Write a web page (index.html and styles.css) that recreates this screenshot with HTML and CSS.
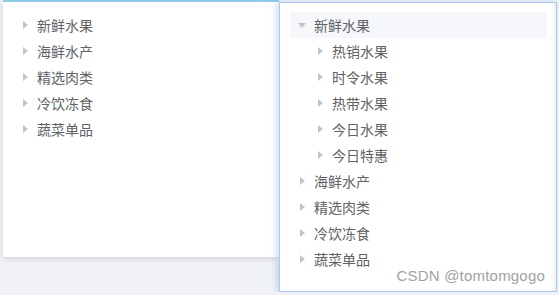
FILE: index.html
```html
<!DOCTYPE html>
<html lang="zh-CN">
<head>
  <meta charset="UTF-8" />
  <meta name="viewport" content="width=device-width, initial-scale=1.0" />
  <title>树形控件</title>
  <link rel="stylesheet" href="styles.css">
</head>
<body>
  <div class="stage">
    <div class="card card-closed">
      <div class="tree">
        <div class="node"><span class="caret"></span><span class="label">新鲜水果</span></div>
        <div class="node"><span class="caret"></span><span class="label">海鲜水产</span></div>
        <div class="node"><span class="caret"></span><span class="label">精选肉类</span></div>
        <div class="node"><span class="caret"></span><span class="label">冷饮冻食</span></div>
        <div class="node"><span class="caret"></span><span class="label">蔬菜单品</span></div>
      </div>
    </div>

    <div class="card card-open">
      <div class="tree">
        <div class="node current"><span class="caret down"></span><span class="label">新鲜水果</span></div>
        <div class="children">
          <div class="node"><span class="caret"></span><span class="label">热销水果</span></div>
          <div class="node"><span class="caret"></span><span class="label">时令水果</span></div>
          <div class="node"><span class="caret"></span><span class="label">热带水果</span></div>
          <div class="node"><span class="caret"></span><span class="label">今日水果</span></div>
          <div class="node"><span class="caret"></span><span class="label">今日特惠</span></div>
        </div>
        <div class="node"><span class="caret"></span><span class="label">海鲜水产</span></div>
        <div class="node"><span class="caret"></span><span class="label">精选肉类</span></div>
        <div class="node"><span class="caret"></span><span class="label">冷饮冻食</span></div>
        <div class="node"><span class="caret"></span><span class="label">蔬菜单品</span></div>
      </div>
      <div class="watermark">CSDN @tomtomgogo</div>
    </div>
  </div>
</body>
</html>
```

FILE: styles.css
```css
body {
  margin: 0;
  background-color: #f0f2f5;
  font-family: "Noto Sans CJK SC", "Microsoft YaHei", sans-serif;
  color: #606266;
}
.stage {
  display: flex;
  align-items: flex-start;
  padding-left: 3px;
}
.card {
  background: #fff;
  box-sizing: border-box;
}
.card-closed {
  width: 276px;
  height: 257px;
  border-top: 2px solid #8ccbe9;
  padding: 10px 10px 0 10px;
  box-shadow: 0 2px 6px rgba(0, 0, 0, 0.12);
}
.card-open {
  position: relative;
  width: 278px;
  height: 290px;
  margin-top: 2px;
  border: 1px solid #a9c8f2;
  padding: 9px 9px 0 10px;
  box-shadow: -3px 0 6px rgba(120, 160, 230, 0.35), inset -4px 0 4px -2px rgba(0, 0, 0, 0.08);
}
.node {
  display: flex;
  align-items: center;
  height: 26px;
  font-size: 14px;
}
.node.current {
  background-color: #f5f7fa;
}
.children .node {
  padding-left: 18px;
}
.caret {
  width: 24px;
  height: 26px;
  display: flex;
  align-items: center;
  justify-content: center;
  flex-shrink: 0;
}
.caret::before {
  content: "";
  width: 0;
  height: 0;
  border-top: 4px solid transparent;
  border-bottom: 4px solid transparent;
  border-left: 5px solid #c0c4cc;
}
.caret.down::before {
  border-left: 4px solid transparent;
  border-right: 4px solid transparent;
  border-top: 5px solid #c0c4cc;
  border-bottom: 0;
}
.label {
  line-height: 26px;
  white-space: nowrap;
}
.watermark {
  position: absolute;
  right: 11px;
  bottom: 7px;
  font-family: "Liberation Sans", Arial, sans-serif;
  font-size: 15px;
  color: #a2a2a2;
  letter-spacing: 0.2px;
}
```
